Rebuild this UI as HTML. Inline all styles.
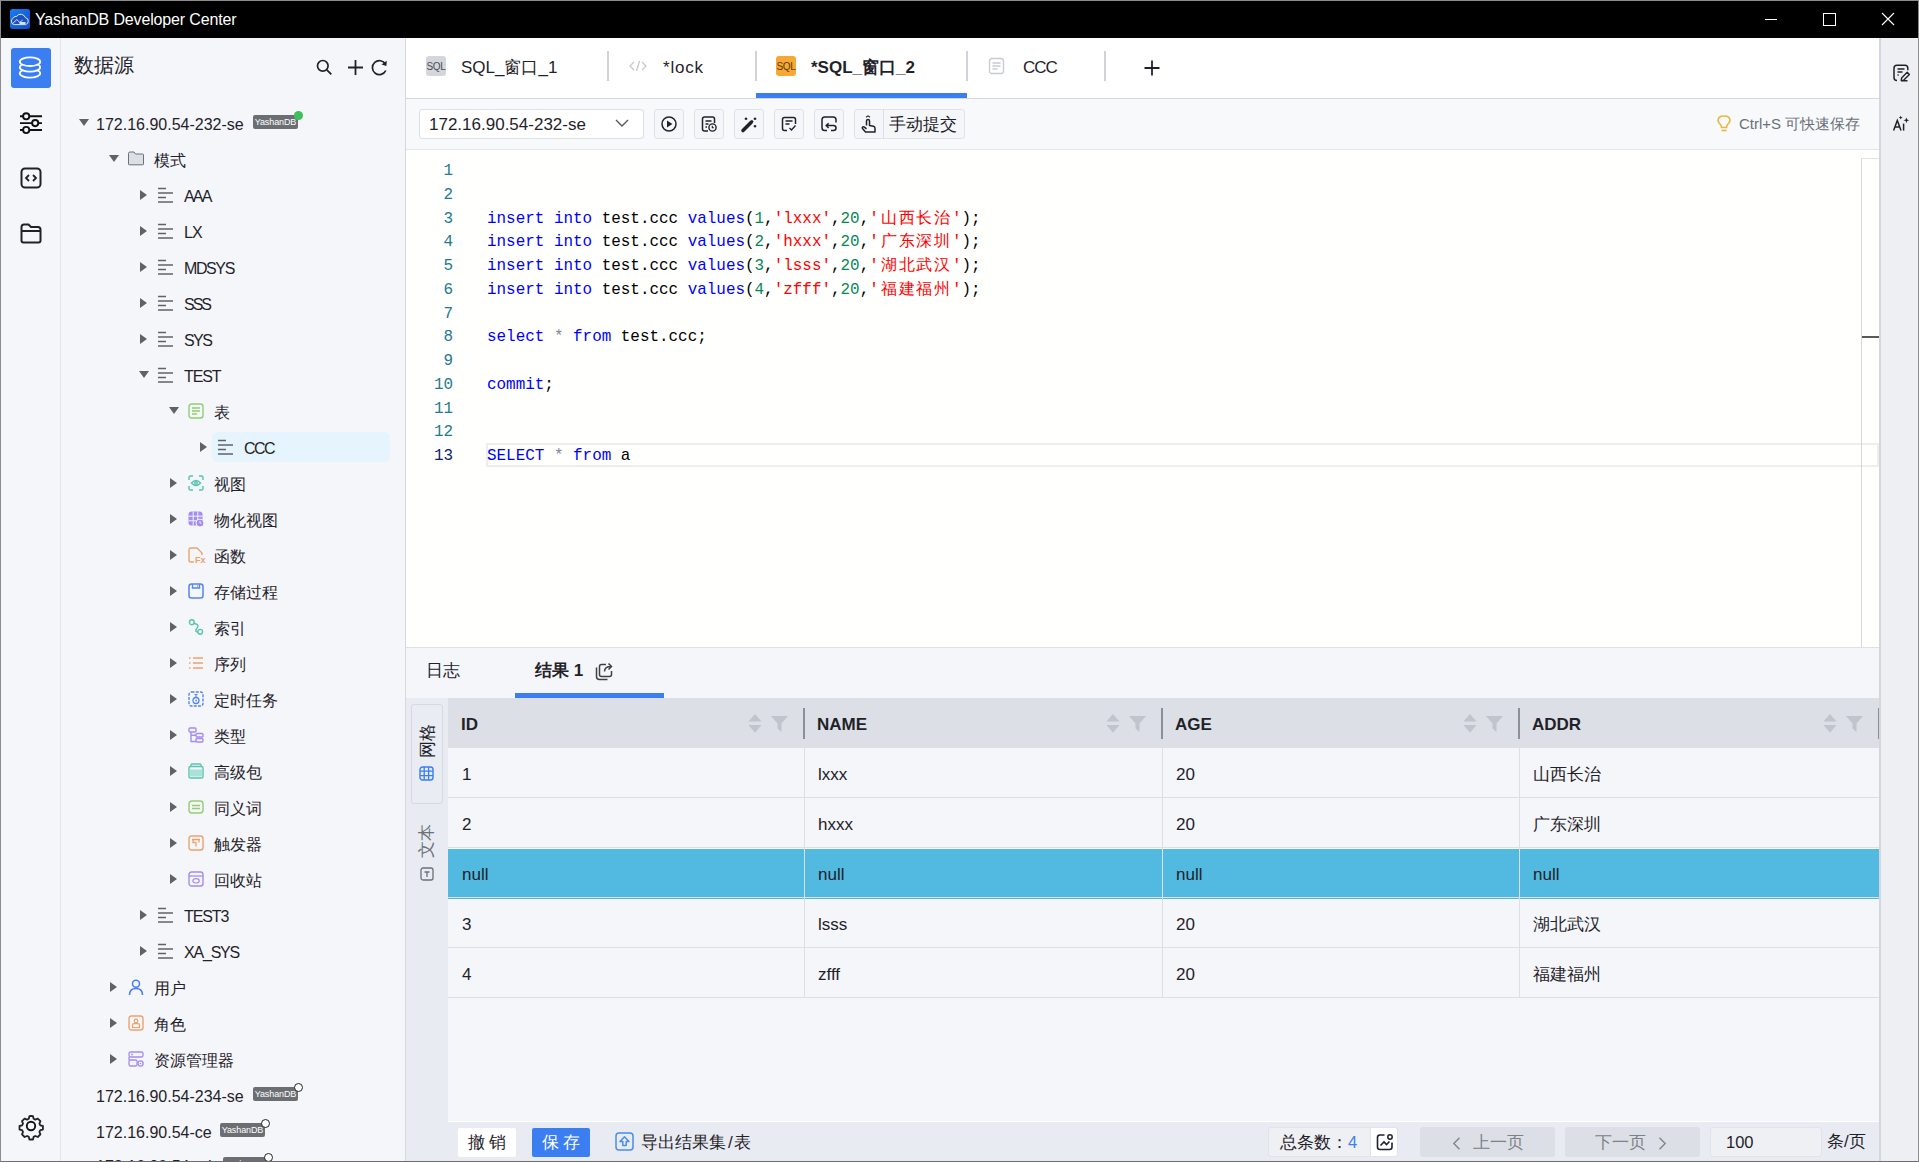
<!DOCTYPE html>
<html><head><meta charset="utf-8">
<style>
*{box-sizing:border-box;margin:0;padding:0}
html,body{width:1919px;height:1162px;overflow:hidden;background:#fff;font-family:"Liberation Sans",sans-serif;color:#1f2329}
.a{position:absolute}
#win{position:absolute;left:0;top:0;width:1919px;height:1162px;border:1px solid #8c8c8c;border-bottom-color:#6e6e6e}
#title{left:1px;top:1px;width:1917px;height:37px;background:#000;color:#fff;font-size:16px}
#iconbar{left:1px;top:38px;width:60px;height:1123px;background:#f5f6fa;border-right:1px solid #e3e7ed}
#tree{left:61px;top:38px;width:344px;height:1123px;background:#f5f6fa;overflow:hidden}
#treeborder{left:405px;top:38px;width:1px;height:1123px;background:#d5d8de}
#main{left:406px;top:38px;width:1474px;height:1123px;background:#fff;overflow:hidden}
#rbar{left:1879px;top:38px;width:39px;height:1123px;background:#eeeff2;border-left:2px solid #d3d6dc}
.row{position:absolute;height:36px;line-height:36px;font-size:16px;white-space:nowrap;color:#1f2329}
.tri-d{position:absolute;width:0;height:0;border-left:5px solid transparent;border-right:5px solid transparent;border-top:7px solid #5f6368}
.tri-r{position:absolute;width:0;height:0;border-top:5px solid transparent;border-bottom:5px solid transparent;border-left:7px solid #5f6368}
svg{position:absolute;overflow:visible}
.code{font-family:"Liberation Mono",monospace;font-size:15.93px;white-space:pre;position:absolute;left:81px;height:23.76px;line-height:23.76px;color:#000}
.ln{font-family:"Liberation Mono",monospace;font-size:15.93px;position:absolute;left:0;width:47px;text-align:right;color:#237893;height:23.76px;line-height:23.76px}
.badge{width:45px;height:14px;background:#6b6e73;color:#fff;font-size:9px;line-height:14px;text-align:center;border-radius:2px;letter-spacing:-0.1px}
.tabt{height:30px;line-height:30px;font-size:17px;color:#1f2329;white-space:nowrap}
.tbtn{width:30px;height:30px;background:#f5f6f9;border:1px solid #dfe2e7;border-radius:3px}
.vt{width:40px;height:20px;line-height:20px;font-size:17px;text-align:center;margin-left:-20px;margin-top:-10px;transform:rotate(-90deg)}
.cjm{font-family:"Liberation Sans",sans-serif;font-size:16.4px;letter-spacing:1.8px;line-height:0;padding:0 0 0 2px}
.cell{height:30px;line-height:30px;font-size:17px;color:#1f2329;white-space:nowrap}
.bbtn{width:58px;height:29px;line-height:29px;text-align:center;font-size:17px;border-radius:2px}
.pbtn{width:135px;height:30px;line-height:30px;background:#dcdfe5;border-radius:3px;color:#7d828a;font-size:17px}
.k{color:#0000ff}.n{color:#098658}.s{color:#ff0000}.o{color:#778899}
</style></head><body>
<div id="win"></div>
<div id="title" class="a">
  <svg style="left:9px;top:8px" width="20" height="20" viewBox="0 0 20 20">
    <defs><linearGradient id="lg" x1="0" y1="0" x2="1" y2="1"><stop offset="0" stop-color="#1a7cf5"/><stop offset="1" stop-color="#0f4fc6"/></linearGradient></defs>
    <rect x="0" y="0" width="20" height="20" rx="2.5" fill="url(#lg)"/>
    <path d="M4.2 15.6A3.3 3.3 0 0 1 2.8 9.6 3.6 3.6 0 0 1 6.6 7.4 5 5 0 0 1 15.4 8.6 3.6 3.6 0 0 1 15.6 15.6z" fill="#1c4fc0" stroke="#fff" stroke-width="0.85"/>
    <path d="M2.3 14.8L6.8 10.6 9.8 13.4 12.6 11" fill="none" stroke="#fff" stroke-width="0.85"/>
    <rect x="9.5" y="13" width="6" height="2" fill="#d5e2ff"/>
  </svg>
  <div class="a" style="left:34px;top:0;height:37px;line-height:37px;font-size:16px;letter-spacing:-0.15px">YashanDB Developer Center</div>
  <div class="a" style="left:1764px;top:18px;width:12px;height:1px;background:#fff"></div>
  <div class="a" style="left:1822px;top:12px;width:13px;height:13px;border:1px solid #fff"></div>
  <svg style="left:1881px;top:12px" width="12" height="12" viewBox="0 0 12 12"><path d="M0 0L12 12M12 0L0 12" stroke="#fff" stroke-width="1.1"/></svg>
</div>

<div id="iconbar" class="a">
  <div class="a" style="left:10px;top:10px;width:40px;height:40px;background:#3a7ef2;border-radius:3px"></div>
  <svg style="left:17px;top:17px" width="24" height="24" viewBox="0 0 24 24">
    <g fill="#3a7ef2" stroke="#fff" stroke-width="1.8">
      <ellipse cx="12" cy="18.3" rx="10.2" ry="4.3"/>
      <ellipse cx="12" cy="12.3" rx="10.2" ry="4.3"/>
      <ellipse cx="12" cy="6.7" rx="10.2" ry="4.3"/>
    </g>
  </svg>
  <svg style="left:18px;top:74px" width="24" height="22" viewBox="0 0 24 22">
    <g fill="none" stroke="#111" stroke-width="1.9">
      <path d="M1 4.3h22M1 11.1h22M1 18h22"/>
    </g>
    <g fill="#f5f6fa" stroke="#111" stroke-width="1.9">
      <circle cx="7.2" cy="4.3" r="3.1"/><circle cx="16.2" cy="11.1" r="3.1"/><circle cx="7.2" cy="18" r="3.1"/>
    </g>
  </svg>
  <svg style="left:19px;top:129px" width="22" height="22" viewBox="0 0 22 22">
    <rect x="1.5" y="1.5" width="19" height="19" rx="3.5" fill="none" stroke="#1f2329" stroke-width="2"/>
    <path d="M9 8l-3 3 3 3M13 8l3 3-3 3" fill="none" stroke="#1f2329" stroke-width="1.8"/>
  </svg>
  <svg style="left:19px;top:184px" width="22" height="22" viewBox="0 0 22 22">
    <path d="M1.5 18.5V5q0-2.5 2.5-2.5h4.5l2.5 2.5h7q2.5 0 2.5 2.5v11q0 2-2 2H3.5q-2 0-2-2z" fill="none" stroke="#1f2329" stroke-width="2"/>
    <path d="M1.5 9h19" stroke="#1f2329" stroke-width="2"/>
  </svg>
  <svg style="left:18px;top:1076px" width="24" height="24" viewBox="0 0 24 24">
    <path d="M12 1.8l2 .3.6 2.6 1.7.9 2.5-1 2.6 2.6-1 2.5.9 1.7 2.6.6v3.6l-2.6.6-.9 1.7 1 2.5-2.6 2.6-2.5-1-1.7.9-.6 2.6h-3.6l-.6-2.6-1.7-.9-2.5 1-2.6-2.6 1-2.5-.9-1.7-2.6-.6v-3.6l2.6-.6.9-1.7-1-2.5 2.6-2.6 2.5 1 1.7-.9.6-2.6z" fill="none" stroke="#1f2329" stroke-width="1.8" stroke-linejoin="round"/>
    <circle cx="12" cy="12" r="4.2" fill="none" stroke="#111" stroke-width="1.9"/>
  </svg>
</div>

<div id="tree" class="a">
<div class="a" style="left:13px;top:13px;height:28px;line-height:28px;font-size:20px;font-weight:500;color:#1f2329">数据源</div>
<svg style="left:255px;top:21px" width="17" height="17" viewBox="0 0 17 17"><circle cx="6.8" cy="6.8" r="5.3" fill="none" stroke="#1f2329" stroke-width="1.7"/><path d="M10.8 10.8l4.5 4.5" stroke="#1f2329" stroke-width="1.8"/></svg>
<svg style="left:286px;top:21px" width="17" height="17" viewBox="0 0 17 17"><path d="M8.5 1v15M1 8.5h15" stroke="#1f2329" stroke-width="1.8"/></svg>
<svg style="left:310px;top:21px" width="17" height="17" viewBox="0 0 17 17"><path d="M14.5 5.2A7 7 0 1 0 14.8 11.5" fill="none" stroke="#1f2329" stroke-width="1.7"/><path d="M15.8 1.8l-.4 5.3-4.9-1.6z" fill="#1f2329"/></svg>
<div class="tri-d" style="left:18px;top:81px"></div>
<div class="row" style="left:35px;top:69px;font-size:16px;letter-spacing:0px">172.16.90.54-232-se</div>
<div class="a badge" style="left:192px;top:77px">YashanDB</div>
<div class="a" style="left:233px;top:73px;width:9px;height:9px;border-radius:50%;background:#3cc15a"></div>
<div class="tri-d" style="left:48px;top:117px"></div>
<svg style="left:67px;top:113px" width="16" height="16" viewBox="0 0 16 16"><path d="M0.5 2.5q0-1.5 1.5-1.5h4l1.5 2h7q1 0 1 1V13q0 .8-.8.8H1.3q-.8 0-.8-.8z" fill="#dcdfe4" stroke="#6b7079" stroke-width="1"/></svg>
<div class="row" style="left:93px;top:105px;font-size:16px;letter-spacing:0px">模式</div>
<div class="tri-r" style="left:79px;top:152px"></div>
<svg style="left:97px;top:149px" width="16" height="16" viewBox="0 0 16 16"><g stroke="#5f6368" stroke-width="1.3"><path d="M0 1.5h8M0 6h15M0 10.5h8M0 15h15"/></g></svg>
<div class="row" style="left:123px;top:141px;font-size:16px;letter-spacing:-1.8px">AAA</div>
<div class="tri-r" style="left:79px;top:188px"></div>
<svg style="left:97px;top:185px" width="16" height="16" viewBox="0 0 16 16"><g stroke="#5f6368" stroke-width="1.3"><path d="M0 1.5h8M0 6h15M0 10.5h8M0 15h15"/></g></svg>
<div class="row" style="left:123px;top:177px;font-size:16px;letter-spacing:-1px">LX</div>
<div class="tri-r" style="left:79px;top:224px"></div>
<svg style="left:97px;top:221px" width="16" height="16" viewBox="0 0 16 16"><g stroke="#5f6368" stroke-width="1.3"><path d="M0 1.5h8M0 6h15M0 10.5h8M0 15h15"/></g></svg>
<div class="row" style="left:123px;top:213px;font-size:16px;letter-spacing:-1.4px">MDSYS</div>
<div class="tri-r" style="left:79px;top:260px"></div>
<svg style="left:97px;top:257px" width="16" height="16" viewBox="0 0 16 16"><g stroke="#5f6368" stroke-width="1.3"><path d="M0 1.5h8M0 6h15M0 10.5h8M0 15h15"/></g></svg>
<div class="row" style="left:123px;top:249px;font-size:16px;letter-spacing:-2px">SSS</div>
<div class="tri-r" style="left:79px;top:296px"></div>
<svg style="left:97px;top:293px" width="16" height="16" viewBox="0 0 16 16"><g stroke="#5f6368" stroke-width="1.3"><path d="M0 1.5h8M0 6h15M0 10.5h8M0 15h15"/></g></svg>
<div class="row" style="left:123px;top:285px;font-size:16px;letter-spacing:-1.6px">SYS</div>
<div class="tri-d" style="left:78px;top:333px"></div>
<svg style="left:97px;top:329px" width="16" height="16" viewBox="0 0 16 16"><g stroke="#5f6368" stroke-width="1.3"><path d="M0 1.5h8M0 6h15M0 10.5h8M0 15h15"/></g></svg>
<div class="row" style="left:123px;top:321px;font-size:16px;letter-spacing:-1.1px">TEST</div>
<div class="tri-d" style="left:108px;top:369px"></div>
<svg style="left:127px;top:365px" width="16" height="16" viewBox="0 0 16 16"><rect x="1" y="1" width="14" height="14" rx="2.5" fill="none" stroke="#93cf72" stroke-width="1.4"/><path d="M4 5h8M4 8h8M4 11h5" stroke="#93cf72" stroke-width="1.4"/></svg>
<div class="row" style="left:153px;top:357px;font-size:16px;letter-spacing:0px">表</div>
<div class="a" style="left:151px;top:394px;width:178px;height:30px;background:#e6f4fd;border-radius:6px"></div>
<div class="tri-r" style="left:139px;top:404px"></div>
<svg style="left:157px;top:401px" width="16" height="16" viewBox="0 0 16 16"><g stroke="#5f6368" stroke-width="1.3"><path d="M0 1.5h8M0 6h15M0 10.5h8M0 15h15"/></g></svg>
<div class="row" style="left:183px;top:393px;font-size:16px;letter-spacing:-1.5px">CCC</div>
<div class="tri-r" style="left:109px;top:440px"></div>
<svg style="left:127px;top:437px" width="16" height="16" viewBox="0 0 16 16"><g fill="none" stroke="#56c5b3" stroke-width="1.4"><path d="M1 5V2.5q0-1.5 1.5-1.5H5M11 1h2.5q1.5 0 1.5 1.5V5M15 11v2.5q0 1.5-1.5 1.5H11M5 15H2.5Q1 15 1 13.5V11"/><path d="M3.5 8q4.5-5 9 0q-4.5 5-9 0z"/><circle cx="8" cy="8" r="1.3"/></g></svg>
<div class="row" style="left:153px;top:429px;font-size:16px;letter-spacing:0px">视图</div>
<div class="tri-r" style="left:109px;top:476px"></div>
<svg style="left:127px;top:473px" width="16" height="16" viewBox="0 0 16 16"><rect x="0.5" y="0.5" width="14" height="14" rx="3" fill="#a48cf2"/><path d="M0.5 5.2h14M0.5 9.8h14M5.2 0.5v14M9.8 0.5v14" stroke="#f5f6fa" stroke-width="1"/><circle cx="12" cy="12" r="4" fill="#a48cf2" stroke="#f5f6fa" stroke-width="1"/><path d="M12 10v2.2h1.5" stroke="#f5f6fa" stroke-width="0.9" fill="none"/></svg>
<div class="row" style="left:153px;top:465px;font-size:16px;letter-spacing:0px">物化视图</div>
<div class="tri-r" style="left:109px;top:512px"></div>
<svg style="left:127px;top:509px" width="16" height="16" viewBox="0 0 16 16"><path d="M6 15H3q-2 0-2-2V3q0-2 2-2h6l5 5v2" fill="none" stroke="#eba36c" stroke-width="1.4"/><text x="7" y="15.5" font-size="9" font-family="Liberation Sans" fill="#eba36c" font-weight="bold">Fx</text></svg>
<div class="row" style="left:153px;top:501px;font-size:16px;letter-spacing:0px">函数</div>
<div class="tri-r" style="left:109px;top:548px"></div>
<svg style="left:127px;top:545px" width="16" height="16" viewBox="0 0 16 16"><rect x="1" y="1" width="14" height="14" rx="2.5" fill="none" stroke="#5585f0" stroke-width="1.5"/><path d="M4.5 1v4h7V1" fill="none" stroke="#5585f0" stroke-width="1.4"/><path d="M9.5 2.5v1.2" stroke="#5585f0" stroke-width="1.2"/></svg>
<div class="row" style="left:153px;top:537px;font-size:16px;letter-spacing:0px">存储过程</div>
<div class="tri-r" style="left:109px;top:584px"></div>
<svg style="left:127px;top:581px" width="16" height="16" viewBox="0 0 16 16"><g fill="none" stroke="#5ac4b0" stroke-width="1.4"><circle cx="3.8" cy="3.2" r="2.4"/><circle cx="12.2" cy="12.8" r="2.4"/><path d="M6 4.2q6 1.5 3 5q-3 3.5 0.8 3.8"/></g></svg>
<div class="row" style="left:153px;top:573px;font-size:16px;letter-spacing:0px">索引</div>
<div class="tri-r" style="left:109px;top:620px"></div>
<svg style="left:127px;top:617px" width="16" height="16" viewBox="0 0 16 16"><g stroke="#eba36c" stroke-width="1.4"><path d="M1 3h1.5M5 3h10M1 8h1.5M5 8h10M1 13h1.5M5 13h10"/></g></svg>
<div class="row" style="left:153px;top:609px;font-size:16px;letter-spacing:0px">序列</div>
<div class="tri-r" style="left:109px;top:656px"></div>
<svg style="left:127px;top:653px" width="16" height="16" viewBox="0 0 16 16"><rect x="1" y="1" width="14" height="14" rx="2.5" fill="none" stroke="#5585f0" stroke-width="1.4" stroke-dasharray="3 1.2"/><circle cx="8" cy="9.5" r="3" fill="none" stroke="#5585f0" stroke-width="1.3"/><path d="M6.5 3.5h3M8 6.5v-3M8 8.5v1.3h1" stroke="#5585f0" stroke-width="1.1" fill="none"/></svg>
<div class="row" style="left:153px;top:645px;font-size:16px;letter-spacing:0px">定时任务</div>
<div class="tri-r" style="left:109px;top:692px"></div>
<svg style="left:127px;top:689px" width="16" height="16" viewBox="0 0 16 16"><g fill="none" stroke="#a48cf2" stroke-width="1.4"><rect x="1" y="1" width="7" height="4" rx="1"/><rect x="8" y="6.5" width="7" height="3.5" rx="1"/><rect x="8" y="11.5" width="7" height="3.5" rx="1"/><path d="M3 5v9.5h5M3 8.2h5"/></g></svg>
<div class="row" style="left:153px;top:681px;font-size:16px;letter-spacing:0px">类型</div>
<div class="tri-r" style="left:109px;top:728px"></div>
<svg style="left:127px;top:725px" width="16" height="16" viewBox="0 0 16 16"><path d="M1 5q0-1.5 1.5-1.5h11q1.5 0 1.5 1.5v8.5q0 1.5-1.5 1.5h-11Q1 15 1 13.5z" fill="none" stroke="#5ac4b0" stroke-width="1.4"/><path d="M1.7 6.5h12.6v7H1.7z" fill="#a9e2d8"/><path d="M3 3.5V2q0-1 1-1h8q1 0 1 1v1.5" fill="none" stroke="#5ac4b0" stroke-width="1.3"/></svg>
<div class="row" style="left:153px;top:717px;font-size:16px;letter-spacing:0px">高级包</div>
<div class="tri-r" style="left:109px;top:764px"></div>
<svg style="left:127px;top:761px" width="16" height="16" viewBox="0 0 16 16"><rect x="1" y="2" width="14" height="12" rx="3" fill="none" stroke="#93cf72" stroke-width="1.4"/><path d="M4 6.5h8M4 9.5h8" stroke="#93cf72" stroke-width="1.4"/></svg>
<div class="row" style="left:153px;top:753px;font-size:16px;letter-spacing:0px">同义词</div>
<div class="tri-r" style="left:109px;top:800px"></div>
<svg style="left:127px;top:797px" width="16" height="16" viewBox="0 0 16 16"><rect x="1" y="1" width="14" height="14" rx="2.5" fill="none" stroke="#eba36c" stroke-width="1.4"/><path d="M4 4.5h8M5 4.5v3h3M8 7.5v4M11 4.5v3" fill="none" stroke="#eba36c" stroke-width="1.3"/></svg>
<div class="row" style="left:153px;top:789px;font-size:16px;letter-spacing:0px">触发器</div>
<div class="tri-r" style="left:109px;top:836px"></div>
<svg style="left:127px;top:833px" width="16" height="16" viewBox="0 0 16 16"><rect x="1" y="1" width="14" height="14" rx="2.5" fill="none" stroke="#a48cf2" stroke-width="1.4"/><path d="M1 5h14" stroke="#a48cf2" stroke-width="1.3"/><ellipse cx="8" cy="9.8" rx="3.2" ry="2.2" fill="none" stroke="#a48cf2" stroke-width="1.2"/></svg>
<div class="row" style="left:153px;top:825px;font-size:16px;letter-spacing:0px">回收站</div>
<div class="tri-r" style="left:79px;top:872px"></div>
<svg style="left:97px;top:869px" width="16" height="16" viewBox="0 0 16 16"><g stroke="#5f6368" stroke-width="1.3"><path d="M0 1.5h8M0 6h15M0 10.5h8M0 15h15"/></g></svg>
<div class="row" style="left:123px;top:861px;font-size:16px;letter-spacing:-1.1px">TEST3</div>
<div class="tri-r" style="left:79px;top:908px"></div>
<svg style="left:97px;top:905px" width="16" height="16" viewBox="0 0 16 16"><g stroke="#5f6368" stroke-width="1.3"><path d="M0 1.5h8M0 6h15M0 10.5h8M0 15h15"/></g></svg>
<div class="row" style="left:123px;top:897px;font-size:16px;letter-spacing:-1.2px">XA_SYS</div>
<div class="tri-r" style="left:49px;top:944px"></div>
<svg style="left:67px;top:941px" width="16" height="16" viewBox="0 0 16 16"><g fill="none" stroke="#4a7cf0" stroke-width="1.5"><circle cx="8" cy="4.8" r="3.5"/><path d="M1.5 16q0-6.5 6.5-6.5t6.5 6.5"/></g></svg>
<div class="row" style="left:93px;top:933px;font-size:16px;letter-spacing:0px">用户</div>
<div class="tri-r" style="left:49px;top:980px"></div>
<svg style="left:67px;top:977px" width="16" height="16" viewBox="0 0 16 16"><rect x="1" y="1" width="14" height="14" rx="2.5" fill="none" stroke="#eba36c" stroke-width="1.4"/><circle cx="8" cy="6" r="1.8" fill="none" stroke="#eba36c" stroke-width="1.2"/><path d="M4.5 12.5h7v-2.5q0-1.3-1.3-1.3H5.8Q4.5 8.7 4.5 10z" fill="none" stroke="#eba36c" stroke-width="1.2"/></svg>
<div class="row" style="left:93px;top:969px;font-size:16px;letter-spacing:0px">角色</div>
<div class="tri-r" style="left:49px;top:1016px"></div>
<svg style="left:67px;top:1013px" width="16" height="16" viewBox="0 0 16 16"><g fill="none" stroke="#a48cf2" stroke-width="1.3"><rect x="1" y="1" width="14" height="5" rx="1.5"/><rect x="1" y="9" width="8" height="6" rx="1.5"/><path d="M1 6v3"/></g><circle cx="4" cy="3.5" r="0.9" fill="#a48cf2"/><circle cx="12.5" cy="12.5" r="2.6" fill="none" stroke="#a48cf2" stroke-width="1.3"/><circle cx="12.5" cy="12.5" r="0.8" fill="#a48cf2"/></svg>
<div class="row" style="left:93px;top:1005px;font-size:16px;letter-spacing:0px">资源管理器</div>
<div class="row" style="left:35px;top:1041px;font-size:16px;letter-spacing:0px">172.16.90.54-234-se</div>
<div class="a badge" style="left:192px;top:1049px">YashanDB</div>
<div class="a" style="left:233px;top:1045px;width:9px;height:9px;border-radius:50%;background:#fff;border:1.2px solid #1f2329"></div>
<div class="row" style="left:35px;top:1077px;font-size:16px;letter-spacing:0px">172.16.90.54-ce</div>
<div class="a badge" style="left:159px;top:1085px">YashanDB</div>
<div class="a" style="left:200px;top:1081px;width:9px;height:9px;border-radius:50%;background:#fff;border:1.2px solid #1f2329"></div>
<div class="row" style="left:35px;top:1111px;font-size:16px;letter-spacing:0px">172.16.90.54-cd</div>
<div class="a badge" style="left:162px;top:1119px">YashanDB</div>
<div class="a" style="left:203px;top:1115px;width:9px;height:9px;border-radius:50%;background:#fff;border:1.2px solid #1f2329"></div>
</div>
<div id="treeborder" class="a"></div>

<div id="main" class="a">
<div class="a" style="left:0;top:0;width:1474px;height:61px;background:#fff;border-bottom:1.5px solid #d5d9df"></div>
<div class="a" style="left:20px;top:18px;width:20px;height:20px;border-radius:3px;background:#d3d6db;color:#4a4e55;font-size:10px;line-height:22px;text-align:center;letter-spacing:-0.3px">SQL</div>
<div class="a tabt" style="left:55px;top:15px">SQL_<span class="cj">窗口</span>_1</div>
<div class="a" style="left:201px;top:13px;width:1.5px;height:30px;background:#d0d3d9"></div>
<div class="a" style="left:349px;top:13px;width:1.5px;height:30px;background:#d0d3d9"></div>
<div class="a" style="left:560px;top:13px;width:1.5px;height:30px;background:#d0d3d9"></div>
<div class="a" style="left:698px;top:13px;width:1.5px;height:30px;background:#d0d3d9"></div>
<svg style="left:222px;top:20px" width="20" height="16" viewBox="0 0 20 16"><path d="M6 4L2 8l4 4M14 4l4 4-4 4M11.5 3l-3 10" fill="none" stroke="#c5c8ce" stroke-width="1.3"/></svg>
<div class="a tabt" style="left:257px;top:15px;letter-spacing:0.8px">*lock</div>
<div class="a" style="left:370px;top:18px;width:20px;height:20px;border-radius:3px;background:#f7a733;color:#5a3b06;font-size:10px;line-height:22px;text-align:center;letter-spacing:-0.3px">SQL</div>
<div class="a tabt" style="left:405px;top:15px;font-weight:bold">*SQL_<span class="cj">窗口</span>_2</div>
<div class="a" style="left:350px;top:55px;width:211px;height:5px;background:#3a7ef2"></div>
<svg style="left:582px;top:19px" width="17" height="18" viewBox="0 0 17 18"><rect x="1.5" y="1.5" width="14" height="15" rx="2.5" fill="none" stroke="#c8cbd1" stroke-width="1.3"/><path d="M4.5 6h8M4.5 9h8M4.5 12h5" stroke="#c8cbd1" stroke-width="1.3"/></svg>
<div class="a tabt" style="left:617px;top:15px;letter-spacing:-1px">CCC</div>
<svg style="left:738px;top:22px" width="16" height="16" viewBox="0 0 16 16"><path d="M8 0.5v15M0.5 8h15" stroke="#1f2329" stroke-width="1.8"/></svg>
<div class="a" style="left:0px;top:61px;width:1473px;height:51px;background:#f8f9fb;border-bottom:1px solid #e4e6ea"></div>
<div class="a" style="left:13px;top:71px;width:225px;height:30px;background:#fff;border:1px solid #dcdfe5;border-radius:3px"></div>
<div class="a" style="left:23px;top:72px;height:30px;line-height:30px;font-size:17px;color:#1f2329">172.16.90.54-232-se</div>
<svg style="left:209px;top:80px" width="14" height="10" viewBox="0 0 14 10"><path d="M1 2l6 6 6-6" fill="none" stroke="#555a62" stroke-width="1.4"/></svg>
<div class="a tbtn" style="left:248px;top:71px"></div>
<svg style="left:255px;top:78px" width="16" height="16" viewBox="0 0 16 16"><circle cx="8" cy="8" r="7" fill="none" stroke="#1f2329" stroke-width="1.5"/><path d="M6 4.6v6.8l5.4-3.4z" fill="#1f2329"/></svg>
<div class="a tbtn" style="left:288px;top:71px"></div>
<svg style="left:295px;top:78px" width="16" height="16" viewBox="0 0 16 16"><path d="M7 15H3.5Q1.5 15 1.5 13V3q0-2 2-2h8q2 0 2 2v4" fill="none" stroke="#1f2329" stroke-width="1.5"/><path d="M4.5 5h6M4.5 8h3M4.5 11h1.5" stroke="#1f2329" stroke-width="1.4"/><circle cx="11.5" cy="11.5" r="3.6" fill="none" stroke="#1f2329" stroke-width="1.4"/><path d="M11.3 9.8v2h1.6" fill="none" stroke="#1f2329" stroke-width="1.1"/></svg>
<div class="a tbtn" style="left:328px;top:71px"></div>
<svg style="left:335px;top:78px" width="16" height="16" viewBox="0 0 16 16"><path d="M2 14.5l8-8" stroke="#1f2329" stroke-width="3.6" stroke-linecap="round"/><path d="M10.2 6.3l1.6-1.6" stroke="#1f2329" stroke-width="2.4"/><path d="M5 1.5v2.5M3.75 2.75h2.5M14 1.5v2.5M12.75 2.75h2.5M14 9v2.5M12.75 10.25h2.5" stroke="#1f2329" stroke-width="1.3"/></svg>
<div class="a tbtn" style="left:368px;top:71px"></div>
<svg style="left:375px;top:78px" width="16" height="16" viewBox="0 0 16 16"><path d="M6 14.5H3.5q-2 0-2-2v-9q0-2 2-2h9q2 0 2 2V8" fill="none" stroke="#1f2329" stroke-width="1.5"/><path d="M4.5 5h7M4.5 8h4" stroke="#1f2329" stroke-width="1.4"/><path d="M8.5 12l2 2 4-4.5" fill="none" stroke="#1f2329" stroke-width="1.4"/></svg>
<div class="a tbtn" style="left:408px;top:71px"></div>
<svg style="left:415px;top:78px" width="16" height="16" viewBox="0 0 16 16"><path d="M6 14.5H3.8Q1 14.5 1 11.7V3.8Q1 1 3.8 1h8.4Q15 1 15 3.8V6.5" fill="none" stroke="#1f2329" stroke-width="1.5"/><path d="M7.6 7.2L5.2 9.6l2.4 2.4M5.2 9.6h7.3q2.5 0 2.5 2.45T12.5 14.5H10" fill="none" stroke="#1f2329" stroke-width="1.5"/></svg>
<div class="a tbtn" style="left:448px;top:71px;width:111px"></div>
<div class="a" style="left:477px;top:71px;width:1px;height:30px;background:#dcdfe5"></div>
<svg style="left:455px;top:77px" width="16" height="18" viewBox="0 0 16 18"><path d="M5.5 10.5V6q0-1.5 1.5-1.5T8.5 6v4.5l4 .8q1.5.4 1.5 2V17H4.5l-3-3.5q-.6-1 .3-1.6.8-.5 1.6.2l2.1 1.8" fill="none" stroke="#1f2329" stroke-width="1.5" stroke-linejoin="round"/><path d="M5 2.2L7 .8l2 1.4" fill="none" stroke="#1f2329" stroke-width="1.1"/></svg>
<div class="a" style="left:483px;top:72px;height:30px;line-height:30px;font-size:17px;color:#1f2329">手动提交</div>
<svg style="left:1311px;top:77px" width="14" height="18" viewBox="0 0 14 18"><path d="M4.5 12.5q0-2-1.5-3.5Q1 7 1 5.5 1 1 7 1t6 4.5q0 1.5-2 3.5-1.5 1.5-1.5 3.5z" fill="none" stroke="#ecb53a" stroke-width="1.5"/><path d="M4.5 15.5h5" stroke="#ecb53a" stroke-width="1.6"/></svg>
<div class="a" style="left:1333px;top:72px;height:28px;line-height:28px;font-size:15px;color:#6b7079">Ctrl+S <span style="font-size:15px">可快速保存</span></div>
<div class="a" style="left:0px;top:112px;width:1473px;height:498px;background:#fffffe;border-bottom:1px solid #dcdfe5"></div>
<div class="a" style="left:80px;top:405px;width:1393px;height:24px;border:2px solid #eeeeee"></div>
<div class="a" style="left:1455px;top:120px;width:1px;height:489px;background:#d6d6d6"></div>
<div class="a" style="left:1455px;top:120px;width:18px;height:1px;background:#e3e3e3"></div>
<div class="a" style="left:1456px;top:298px;width:17px;height:2px;background:#5a5a5a"></div>
<div class="ln" style="top:122.00px;color:#237893">1</div>
<div class="ln" style="top:145.76px;color:#237893">2</div>
<div class="ln" style="top:169.52px;color:#237893">3</div>
<div class="code" style="top:169.52px"><span class="k">insert</span> <span class="k">into</span> test.ccc <span class="k">values</span>(<span class="n">1</span>,<span class="s">'lxxx'</span>,<span class="n">20</span>,<span class="s">'<span class="cjm">山西长治</span>'</span>);</div>
<div class="ln" style="top:193.28px;color:#237893">4</div>
<div class="code" style="top:193.28px"><span class="k">insert</span> <span class="k">into</span> test.ccc <span class="k">values</span>(<span class="n">2</span>,<span class="s">'hxxx'</span>,<span class="n">20</span>,<span class="s">'<span class="cjm">广东深圳</span>'</span>);</div>
<div class="ln" style="top:217.04px;color:#237893">5</div>
<div class="code" style="top:217.04px"><span class="k">insert</span> <span class="k">into</span> test.ccc <span class="k">values</span>(<span class="n">3</span>,<span class="s">'lsss'</span>,<span class="n">20</span>,<span class="s">'<span class="cjm">湖北武汉</span>'</span>);</div>
<div class="ln" style="top:240.80px;color:#237893">6</div>
<div class="code" style="top:240.80px"><span class="k">insert</span> <span class="k">into</span> test.ccc <span class="k">values</span>(<span class="n">4</span>,<span class="s">'zfff'</span>,<span class="n">20</span>,<span class="s">'<span class="cjm">福建福州</span>'</span>);</div>
<div class="ln" style="top:264.56px;color:#237893">7</div>
<div class="ln" style="top:288.32px;color:#237893">8</div>
<div class="code" style="top:288.32px"><span class="k">select</span> <span class="o">*</span> <span class="k">from</span> test.ccc;</div>
<div class="ln" style="top:312.08px;color:#237893">9</div>
<div class="ln" style="top:335.84px;color:#237893">10</div>
<div class="code" style="top:335.84px"><span class="k">commit</span>;</div>
<div class="ln" style="top:359.60px;color:#237893">11</div>
<div class="ln" style="top:383.36px;color:#237893">12</div>
<div class="ln" style="top:407.12px;color:#0b216f">13</div>
<div class="code" style="top:407.12px"><span class="k">SELECT</span> <span class="o">*</span> <span class="k">from</span> a</div>
<div class="a" style="left:0px;top:610px;width:1473px;height:50px;background:#f5f6fa"></div>
<div class="a" style="left:20px;top:618px;height:30px;line-height:30px;font-size:17px;color:#1f2329">日志</div>
<div class="a" style="left:129px;top:618px;height:30px;line-height:30px;font-size:17px;color:#1f2329;font-weight:bold">结果 1</div>
<svg style="left:188px;top:623px" width="20" height="19" viewBox="0 0 20 19"><path d="M12 3.5H7.5q-2 0-2 2v8q0 2 2 2h8q2 0 2-2V10" fill="none" stroke="#3d4148" stroke-width="1.5"/><path d="M2.5 6.5v9q0 3 3 3h8" fill="none" stroke="#3d4148" stroke-width="1.5"/><path d="M10.5 10.5q0-5 6.5-5M14.5 2.5l3 3-3 3" fill="none" stroke="#3d4148" stroke-width="1.5"/></svg>
<div class="a" style="left:109px;top:655px;width:149px;height:5px;background:#3a7ef2"></div>
<div class="a" style="left:0px;top:660px;width:42px;height:463px;background:#e8ebf2"></div>
<div class="a" style="left:5px;top:666px;width:32px;height:100px;background:#e9ecf2;border:1px solid #d5d9e0;border-radius:3px"></div>
<div class="a vt" style="left:22px;top:703px;color:#1f2329">网格</div>
<svg style="left:13px;top:728px" width="15" height="15" viewBox="0 0 15 15"><rect x="1" y="1" width="13" height="13" rx="2.5" fill="none" stroke="#3a7ef2" stroke-width="1.4"/><path d="M1 5.2h13M1 9.6h13M5.2 1v13M9.6 1v13" stroke="#3a7ef2" stroke-width="1.3"/></svg>
<div class="a vt" style="left:21px;top:803px;color:#6b7079">文本</div>
<svg style="left:14px;top:829px" width="14" height="14" viewBox="0 0 14 14"><rect x="1" y="1" width="12" height="12" rx="2" fill="none" stroke="#6b7079" stroke-width="1.3"/><path d="M4.5 5h5M7 5v5" stroke="#6b7079" stroke-width="1.3"/></svg>
<div class="a" style="left:42px;top:660px;width:1431px;height:424px;background:#f5f6fa"></div>
<div class="a" style="left:42px;top:660px;width:1431px;height:50px;background:#dcdfe6"></div>
<div class="a" style="left:42px;top:759px;width:1431px;height:1px;background:#dcdfe5"></div>
<div class="a" style="left:42px;top:809px;width:1431px;height:1px;background:#dcdfe5"></div>
<div class="a" style="left:42px;top:811px;width:1431px;height:48px;background:#52b9e0"></div>
<div class="a" style="left:42px;top:810px;width:1431px;height:1px;background:#fafbfd"></div>
<div class="a" style="left:42px;top:860px;width:1431px;height:1px;background:#52b9e0"></div>
<div class="a" style="left:42px;top:859px;width:1431px;height:1px;background:#dcdfe5"></div>
<div class="a" style="left:42px;top:909px;width:1431px;height:1px;background:#dcdfe5"></div>
<div class="a" style="left:42px;top:959px;width:1431px;height:1px;background:#dcdfe5"></div>
<div class="a" style="left:398px;top:710px;width:1px;height:250px;background:#dcdfe5"></div>
<div class="a" style="left:756px;top:710px;width:1px;height:250px;background:#dcdfe5"></div>
<div class="a" style="left:1113px;top:710px;width:1px;height:250px;background:#dcdfe5"></div>
<div class="a cell" style="left:55px;top:672px;font-weight:bold;color:#1f2329">ID</div>
<svg style="left:342px;top:676px" width="14" height="19" viewBox="0 0 14 19"><path d="M0.5 7.6L7 0l6.5 7.6zM0.5 11L7 18.8 13.5 11z" fill="#c0c4cc"/></svg>
<svg style="left:365px;top:678px" width="17" height="16" viewBox="0 0 17 16"><path d="M0 0h17l-6.5 7.5V16L6.5 12.5V7.5z" fill="#c0c4cc"/></svg>
<div class="a" style="left:397px;top:670px;width:1.5px;height:31px;background:#8a9099"></div>
<div class="a cell" style="left:56px;top:722px">1</div>
<div class="a cell" style="left:56px;top:772px">2</div>
<div class="a cell" style="left:56px;top:822px">null</div>
<div class="a cell" style="left:56px;top:872px">3</div>
<div class="a cell" style="left:56px;top:922px">4</div>
<div class="a cell" style="left:411px;top:672px;font-weight:bold;color:#1f2329">NAME</div>
<svg style="left:700px;top:676px" width="14" height="19" viewBox="0 0 14 19"><path d="M0.5 7.6L7 0l6.5 7.6zM0.5 11L7 18.8 13.5 11z" fill="#c0c4cc"/></svg>
<svg style="left:723px;top:678px" width="17" height="16" viewBox="0 0 17 16"><path d="M0 0h17l-6.5 7.5V16L6.5 12.5V7.5z" fill="#c0c4cc"/></svg>
<div class="a" style="left:755px;top:670px;width:1.5px;height:31px;background:#8a9099"></div>
<div class="a cell" style="left:412px;top:722px">lxxx</div>
<div class="a cell" style="left:412px;top:772px">hxxx</div>
<div class="a cell" style="left:412px;top:822px">null</div>
<div class="a cell" style="left:412px;top:872px">lsss</div>
<div class="a cell" style="left:412px;top:922px">zfff</div>
<div class="a cell" style="left:769px;top:672px;font-weight:bold;color:#1f2329">AGE</div>
<svg style="left:1057px;top:676px" width="14" height="19" viewBox="0 0 14 19"><path d="M0.5 7.6L7 0l6.5 7.6zM0.5 11L7 18.8 13.5 11z" fill="#c0c4cc"/></svg>
<svg style="left:1080px;top:678px" width="17" height="16" viewBox="0 0 17 16"><path d="M0 0h17l-6.5 7.5V16L6.5 12.5V7.5z" fill="#c0c4cc"/></svg>
<div class="a" style="left:1112px;top:670px;width:1.5px;height:31px;background:#8a9099"></div>
<div class="a cell" style="left:770px;top:722px">20</div>
<div class="a cell" style="left:770px;top:772px">20</div>
<div class="a cell" style="left:770px;top:822px">null</div>
<div class="a cell" style="left:770px;top:872px">20</div>
<div class="a cell" style="left:770px;top:922px">20</div>
<div class="a cell" style="left:1126px;top:672px;font-weight:bold;color:#1f2329">ADDR</div>
<svg style="left:1417px;top:676px" width="14" height="19" viewBox="0 0 14 19"><path d="M0.5 7.6L7 0l6.5 7.6zM0.5 11L7 18.8 13.5 11z" fill="#c0c4cc"/></svg>
<svg style="left:1440px;top:678px" width="17" height="16" viewBox="0 0 17 16"><path d="M0 0h17l-6.5 7.5V16L6.5 12.5V7.5z" fill="#c0c4cc"/></svg>
<div class="a" style="left:1472px;top:670px;width:1.5px;height:31px;background:#8a9099"></div>
<div class="a cell" style="left:1127px;top:722px">山西长治</div>
<div class="a cell" style="left:1127px;top:772px">广东深圳</div>
<div class="a cell" style="left:1127px;top:822px">null</div>
<div class="a cell" style="left:1127px;top:872px">湖北武汉</div>
<div class="a cell" style="left:1127px;top:922px">福建福州</div>
<div class="a" style="left:42px;top:1083px;width:1431px;height:1px;background:#fff"></div>
<div class="a" style="left:42px;top:1084px;width:1431px;height:39px;background:#e8ebf2"></div>
<div class="a bbtn" style="left:52px;top:1090px;background:#fff;color:#1f2329">撤 销</div>
<div class="a bbtn" style="left:126px;top:1090px;background:#3a7ef2;color:#fff">保 存</div>
<svg style="left:209px;top:1094px" width="19" height="19" viewBox="0 0 19 19"><rect x="1" y="1" width="17" height="17" rx="3" fill="none" stroke="#4a8fe6" stroke-width="1.5"/><path d="M5 9.5L9.5 4.8 14 9.5h-2.8v4H7.8v-4z" fill="none" stroke="#4a8fe6" stroke-width="1.5" stroke-linejoin="round"/></svg>
<div class="a" style="left:235px;top:1090px;height:30px;line-height:30px;font-size:17px;color:#1f2329">导出结果集<span style="margin:0 1.5px 0 2px">/</span>表</div>
<div class="a" style="left:862px;top:1089px;width:130px;height:30px;background:#eef0f4;border:1px solid #e0e3e9;border-radius:3px"></div>
<div class="a" style="left:964px;top:1089px;width:28px;height:30px;background:#fff;border:1px solid #e0e3e9;border-radius:0 3px 3px 0"></div>
<div class="a" style="left:874px;top:1089px;height:30px;line-height:30px;font-size:17px;color:#1f2329">总条数：<span style="color:#3a7ef2;font-size:16.5px">4</span></div>
<svg style="left:970px;top:1095px" width="18" height="18" viewBox="0 0 18 18"><path d="M8.5 2H4q-2.5 0-2.5 2.5v9.5q0 2.5 2.5 2.5h9.5q2.5 0 2.5-2.5V9.5" fill="none" stroke="#1f2329" stroke-width="1.6"/><path d="M4.5 12.5l3.5-3.5 2.5 2.5 3-3" fill="none" stroke="#1f2329" stroke-width="1.6"/><circle cx="14" cy="4" r="2.2" fill="none" stroke="#1f2329" stroke-width="1.5"/></svg>
<div class="a pbtn" style="left:1014px;top:1089px"><svg style="left:32px;top:10px" width="9" height="13" viewBox="0 0 9 13"><path d="M7.5 0.8L1.8 6.5l5.7 5.7" fill="none" stroke="#7d828a" stroke-width="1.3"/></svg><span style="position:absolute;left:53px;top:1px">上一页</span></div>
<div class="a pbtn" style="left:1159px;top:1089px"><span style="position:absolute;left:30px;top:1px">下一页</span><svg style="left:93px;top:10px" width="9" height="13" viewBox="0 0 9 13"><path d="M1.5 0.8l5.7 5.7-5.7 5.7" fill="none" stroke="#7d828a" stroke-width="1.3"/></svg></div>
<div class="a" style="left:1304px;top:1089px;width:112px;height:30px;background:#eef0f4;border:1px solid #e0e3e9;border-radius:3px;line-height:28px;font-size:16.5px;padding-left:15px;color:#1f2329">100</div>
<div class="a" style="left:1421px;top:1089px;height:30px;line-height:30px;font-size:17px;color:#1f2329">条/页</div>
</div>

<div id="rbar" class="a">
<svg style="left:12px;top:26px" width="18" height="18" viewBox="0 0 18 18"><path d="M4 16.5Q1 16.5 1 13.5V4Q1 1.2 4 1.2h8Q14.8 1.2 14.8 4v2.2" fill="none" stroke="#1f2329" stroke-width="1.5"/><path d="M4.5 5h7M4.5 8h5M4.5 11h1.2" stroke="#1f2329" stroke-width="1.4"/><path d="M8.2 16.5l.4-2.6 5.6-5.6 2.2 2.2-5.6 5.6zM8 16.7h6.5" fill="none" stroke="#1f2329" stroke-width="1.4" stroke-linejoin="round"/></svg>
<svg style="left:12px;top:77px" width="20" height="18" viewBox="0 0 20 18"><path d="M0.6 15.6L4.3 5.4 8 15.6M1.9 12h4.8" fill="none" stroke="#1f2329" stroke-width="1.5"/><path d="M10.6 8.6v7" stroke="#1f2329" stroke-width="1.5"/><path d="M7.7 0.6l.55 1.45 1.45.55-1.45.55-.55 1.45-.55-1.45-1.45-.55 1.45-.55zM13.4 2.4l.75 2.15 2.15.75-2.15.75-.75 2.15-.75-2.15-2.15-.75 2.15-.75z" fill="#1f2329"/></svg>

</div>
</body></html>
